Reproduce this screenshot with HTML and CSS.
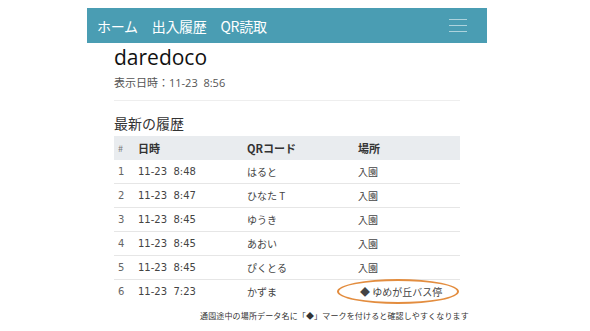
FILE: index.html
```html
<!DOCTYPE html>
<html lang="ja">
<head>
    <meta charset="UTF-8">
    <meta name="viewport" content="width=device-width, initial-scale=1.0">
    <title>daredoco</title>
    <link rel="stylesheet" href="styles.css">
</head>
<body>
<div class="page">
    <!-- ナビゲーション -->
    <nav class="navbar">
        <div class="nav-links">
            <a href="#">ホーム</a>
            <a href="#">出入履歴</a>
            <a href="#">QR読取</a>
        </div>
        <button type="button" class="toggler" aria-label="menu">
            <span></span><span></span><span></span>
        </button>
    </nav>

    <div class="content">
        <h1>daredoco</h1>
        <p class="shown-at">表示日時：11-23&nbsp;&nbsp;8:56</p>
        <hr>

        <h3>最新の履歴</h3>
        <table class="history">
            <thead>
                <tr>
                    <th class="col-no">#</th>
                    <th class="col-date">日時</th>
                    <th class="col-qr">QRコード</th>
                    <th class="col-place">場所</th>
                </tr>
            </thead>
            <tbody>
                <tr><td class="no">1</td><td>11-23&nbsp;&nbsp;8:48</td><td class="ja">はると</td><td class="ja">入園</td></tr>
                <tr><td class="no">2</td><td>11-23&nbsp;&nbsp;8:47</td><td class="ja">ひなた T</td><td class="ja">入園</td></tr>
                <tr><td class="no">3</td><td>11-23&nbsp;&nbsp;8:45</td><td class="ja">ゆうき</td><td class="ja">入園</td></tr>
                <tr><td class="no">4</td><td>11-23&nbsp;&nbsp;8:45</td><td class="ja">あおい</td><td class="ja">入園</td></tr>
                <tr><td class="no">5</td><td>11-23&nbsp;&nbsp;8:45</td><td class="ja">ぴくとる</td><td class="ja">入園</td></tr>
                <tr class="last"><td class="no">6</td><td>11-23&nbsp;&nbsp;7:23</td><td class="ja">かずま</td>
                    <td class="ja place-mark"><span class="mark">◆ ゆめが丘バス停</span><span class="oval"></span></td></tr>
            </tbody>
        </table>

        <p class="note">通園途中の場所データ名に「◆」マークを付けると確認しやすくなります</p>
    </div>
</div>
</body>
</html>
```

FILE: styles.css
```css
body {
    margin: 0;
    padding: 0;
    background: #fff;
    color: #222;
    font-family: "Open Sans", "Noto Sans CJK JP", sans-serif;
}
.page {
    width: 400px;
    margin: 8px 0 0 87px;
}
.navbar {
    display: flex;
    justify-content: space-between;
    align-items: center;
    height: 35px;
    padding: 0 18px 0 10px;
    background-color: #4a9db3;
}
.nav-links {
    display: flex;
    gap: 14px;
}
.nav-links a {
    color: #fff;
    text-decoration: none;
    font-size: 14px;
    font-family: "Noto Sans CJK JP", sans-serif;
    letter-spacing: -0.3px;
}
.toggler {
    display: flex;
    flex-direction: column;
    gap: 5px;
    padding: 4px 2px;
    background: none;
    border: none;
}
.toggler span {
    display: block;
    width: 18px;
    height: 1px;
    background: rgba(255, 255, 255, 0.55);
}
.content {
    padding: 0 27px;
}
h1 {
    margin: 0;
    font-size: 21px;
    font-weight: 500;
    line-height: 28px;
    color: #111;
}
.shown-at {
    margin: 3px 0 0;
    font-size: 11px;
    color: #555;
}
hr {
    width: 346px;
    margin: 10px 0 0;
    border: none;
    border-top: 1px solid #eee;
}
h3 {
    margin: 12px 0 3px;
    font-size: 14px;
    font-weight: 400;
    color: #333;
    font-family: "Noto Sans CJK JP", sans-serif;
}
.history {
    width: 346px;
    border-collapse: collapse;
    font-size: 10px;
    font-family: "DejaVu Sans", "Noto Sans CJK JP", sans-serif;
}
.history th {
    height: 24px;
    padding: 0 0 0 4px;
    text-align: left;
    font-weight: 600;
    font-size: 11px;
    color: #333;
    background: #e9ecef;
    font-family: "Noto Sans CJK JP", sans-serif;
}
.history th.col-no {
    width: 16px;
    font-weight: 400;
    color: #777;
    font-size: 9px;
}
.history th.col-date { width: 105px; }
.history th.col-qr { width: 107px; }
.history td {
    height: 23px;
    padding: 0 0 0 4px;
    border-bottom: 1px solid #e6e6e6;
    color: #444;
}
.history tr.last td {
    border-bottom: none;
}
.history td.no {
    color: #666;
}
.history td.ja {
    font-family: "Noto Sans CJK JP", sans-serif;
    color: #444;
}
.place-mark {
    position: relative;
}
.mark {
    padding-left: 2px;
}
.oval {
    position: absolute;
    left: -17px;
    top: -1px;
    width: 118px;
    height: 21px;
    border: 2px solid #e38d3f;
    border-radius: 50%;
}
.note {
    margin: 7px 0 0;
    padding-left: 86px;
    font-size: 8px;
    letter-spacing: 0.15px;
    color: #333;
    font-family: "Noto Sans CJK JP", sans-serif;
    white-space: nowrap;
}
```
